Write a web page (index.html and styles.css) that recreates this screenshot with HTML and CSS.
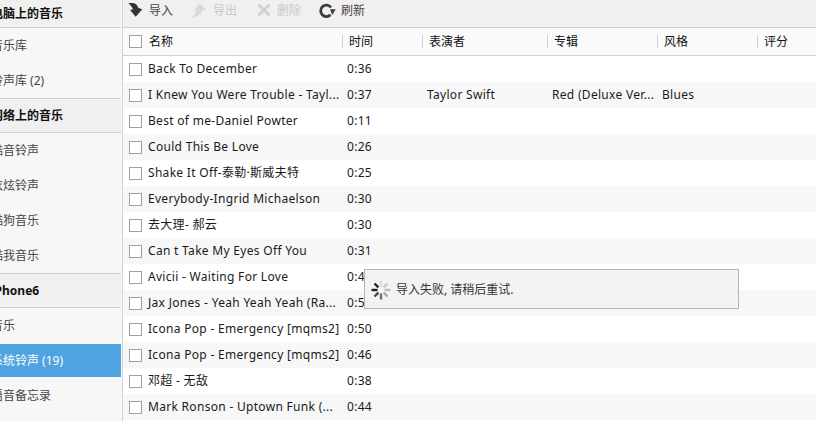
FILE: index.html
```html
<!DOCTYPE html>
<html lang="zh">
<head>
<meta charset="utf-8">
<title>音乐</title>
<link rel="stylesheet" href="styles.css">
</head>
<body>
<div class="app">
  <aside class="sidebar">
    <div class="group first">电脑上的音乐</div>
    <div class="item">音乐库</div>
    <div class="item">铃声库 (2)</div>
    <div class="group">网络上的音乐</div>
    <div class="item">酷音铃声</div>
    <div class="item">炫炫铃声</div>
    <div class="item">酷狗音乐</div>
    <div class="item">酷我音乐</div>
    <div class="group">iPhone6</div>
    <div class="item">音乐</div>
    <div class="item selected">系统铃声 (19)</div>
    <div class="item">语音备忘录</div>
  </aside>
  <main class="main">
    <div class="toolbar">
      <span class="tool">
        <svg class="icon" viewBox="0 0 16 16"><path d="M0.3 1.3 C3 0.8 6 1 7.7 2 C9 3 9.8 4.5 10.5 6 L14.3 7.3 L7.7 14.7 L2 8 L5 7.3 C4 5 2.5 3 0.3 1.3Z" fill="#333"/></svg>
        导入
      </span>
      <span class="tool off">
        <svg class="icon" viewBox="0 0 16 16"><path d="M7.7 1.3 L14.3 8 L10.5 8 C10 11.5 6 14.5 0 15.3 C2 13 3.8 11 4.3 8 L2 8Z" fill="#d8d8d8"/></svg>
        导出
      </span>
      <span class="tool off">
        <svg class="icon" viewBox="0 0 16 16"><path d="M2.5 2.5 L13.5 13.5 M13.5 2.5 L2.5 13.5" stroke="#d0d0d0" stroke-width="3" fill="none"/></svg>
        删除
      </span>
      <span class="tool">
        <svg class="icon" viewBox="0 0 16 16"><path d="M10.5 12.8 A5.7 5.7 0 1 1 11 5.5" stroke="#3c3c3c" stroke-width="2.8" fill="none"/><path d="M10 7.3 L15.7 7.3 L12.3 13Z" fill="#3c3c3c"/></svg>
        刷新
      </span>
    </div>
    <div class="head">
      <span class="cell c-check"><i class="box"></i></span>
      <span class="cell c-name">名称</span>
      <span class="cell c-time sep">时间</span>
      <span class="cell c-artist sep">表演者</span>
      <span class="cell c-album sep">专辑</span>
      <span class="cell c-genre sep">风格</span>
      <span class="cell c-rate sep">评分</span>
    </div>
    <div class="row"><span class="cell c-check"><i class="box"></i></span><span class="cell c-name">Back To December</span><span class="cell c-time">0:36</span></div>
    <div class="row"><span class="cell c-check"><i class="box"></i></span><span class="cell c-name">I Knew You Were Trouble - Tayl...</span><span class="cell c-time">0:37</span><span class="cell c-artist">Taylor Swift</span><span class="cell c-album">Red (Deluxe Ver...</span><span class="cell c-genre">Blues</span></div>
    <div class="row"><span class="cell c-check"><i class="box"></i></span><span class="cell c-name">Best of me-Daniel Powter</span><span class="cell c-time">0:11</span></div>
    <div class="row"><span class="cell c-check"><i class="box"></i></span><span class="cell c-name">Could This Be Love</span><span class="cell c-time">0:26</span></div>
    <div class="row"><span class="cell c-check"><i class="box"></i></span><span class="cell c-name">Shake It Off-泰勒·斯威夫特</span><span class="cell c-time">0:25</span></div>
    <div class="row"><span class="cell c-check"><i class="box"></i></span><span class="cell c-name">Everybody-Ingrid Michaelson</span><span class="cell c-time">0:30</span></div>
    <div class="row"><span class="cell c-check"><i class="box"></i></span><span class="cell c-name">去大理- 郝云</span><span class="cell c-time">0:30</span></div>
    <div class="row"><span class="cell c-check"><i class="box"></i></span><span class="cell c-name">Can t Take My Eyes Off You</span><span class="cell c-time">0:31</span></div>
    <div class="row"><span class="cell c-check"><i class="box"></i></span><span class="cell c-name">Avicii - Waiting For Love</span><span class="cell c-time">0:46</span></div>
    <div class="row"><span class="cell c-check"><i class="box"></i></span><span class="cell c-name">Jax Jones - Yeah Yeah Yeah (Ra...</span><span class="cell c-time">0:52</span></div>
    <div class="row"><span class="cell c-check"><i class="box"></i></span><span class="cell c-name">Icona Pop - Emergency [mqms2]</span><span class="cell c-time">0:50</span></div>
    <div class="row"><span class="cell c-check"><i class="box"></i></span><span class="cell c-name">Icona Pop - Emergency [mqms2]</span><span class="cell c-time">0:46</span></div>
    <div class="row"><span class="cell c-check"><i class="box"></i></span><span class="cell c-name">邓超 - 无敌</span><span class="cell c-time">0:38</span></div>
    <div class="row"><span class="cell c-check"><i class="box"></i></span><span class="cell c-name">Mark Ronson - Uptown Funk (...</span><span class="cell c-time">0:44</span></div>
    <div class="toast">
      <svg class="spinner" viewBox="0 0 20 20">
        <g stroke-width="2.4" fill="none">
          <path d="M10 0.5 V6.5" stroke="#dcdcdc"/>
          <path d="M16.5 3.5 L12.6 7.4" stroke="#c8c8c8"/>
          <path d="M19.5 10 H13.5" stroke="#bcbcbc"/>
          <path d="M16.5 16.5 L12.6 12.6" stroke="#a8a8a8"/>
          <path d="M10 19.5 V13.5" stroke="#6c6c6c"/>
          <path d="M3.5 16.5 L7.4 12.6" stroke="#444"/>
          <path d="M0.5 10 H6.5" stroke="#1c1c1c"/>
          <path d="M3.5 3.5 L7.4 7.4" stroke="#222"/>
        </g>
      </svg>
      <span>导入失败, 请稍后重试.</span>
    </div>
  </main>
</div>
</body>
</html>
```
FILE: styles.css
```css
* { box-sizing: border-box; }
html, body { margin: 0; height: 100%; overflow: hidden; background: #fff; }
body { font: 12px/1 "Noto Sans", "Noto Sans CJK SC", sans-serif; color: #222; }
.app { display: flex; height: 421px; overflow: hidden; }

.sidebar {
  width: 123px; flex: none; overflow: hidden;
  background: #f7f7f7;
  border-right: 1px solid #d4d4d4;
  padding-right: 1px;
}
.group {
  height: 35px; display: flex; align-items: center;
  background: #f0f0f0; color: #111;
  font-weight: 700;
  border-top: 1px solid #d0d0d0; border-bottom: 1px solid #d0d0d0;
  text-indent: -9px; white-space: nowrap;
}
.group.first { height: 28px; border-top: 0; }
.item {
  height: 35px; display: flex; align-items: center;
  padding-top: 1px;
  color: #444; white-space: nowrap;
  text-indent: -9px;
}
.item.selected { background: #4fa3e0; color: #fff; height: 33px; margin: 1px 0; }

.main { flex: 1; min-width: 0; position: relative; overflow: hidden; }
.toolbar {
  height: 28px; background: #f0f0f0; border-bottom: 1px solid #d0d0d0;
  display: flex; align-items: center; padding: 0 0 5px 5px;
  color: #444;
}
.tool { display: flex; align-items: center; gap: 5px; width: 64px; flex: none; }
.tool.off { color: #c8c8c8; }
.icon { width: 16px; height: 16px; flex: none; overflow: visible; margin-bottom: 2px; }

.head, .row { display: flex; align-items: center; white-space: nowrap; }
.head { height: 28px; background: #fafafa; border-bottom: 1px solid #d0d0d0; color: #111; }
.row { height: 26px; color: #1a1a1a; letter-spacing: 0.3px; }
.row:nth-of-type(even) { background: #f7f7f7; }
.cell { flex: none; }
.box { display: block; width: 13px; height: 13px; background: #fff; border: 1px solid #a0a0a0; }
.c-check { width: 25px; padding-left: 6px; }
.c-name { width: 199px; }
.c-time { width: 80px; }
.c-artist { width: 125px; }
.c-album { width: 110px; }
.c-genre { width: 100px; }
.c-rate { width: 59px; }
.head .c-name { padding-left: 1px; width: 194px; }
.sep { border-left: 1px solid #d0d0d0; height: 13px; line-height: 13px; padding-left: 6px; }

.toast {
  position: absolute; left: 241px; top: 269px;
  width: 375px; height: 40px;
  background: #f3f3f3; border: 1px solid #b4b4b4;
  display: flex; align-items: center; gap: 5px; padding: 1px 0 0 6px;
  color: #333;
}
.spinner { width: 20px; height: 20px; flex: none; }
```
